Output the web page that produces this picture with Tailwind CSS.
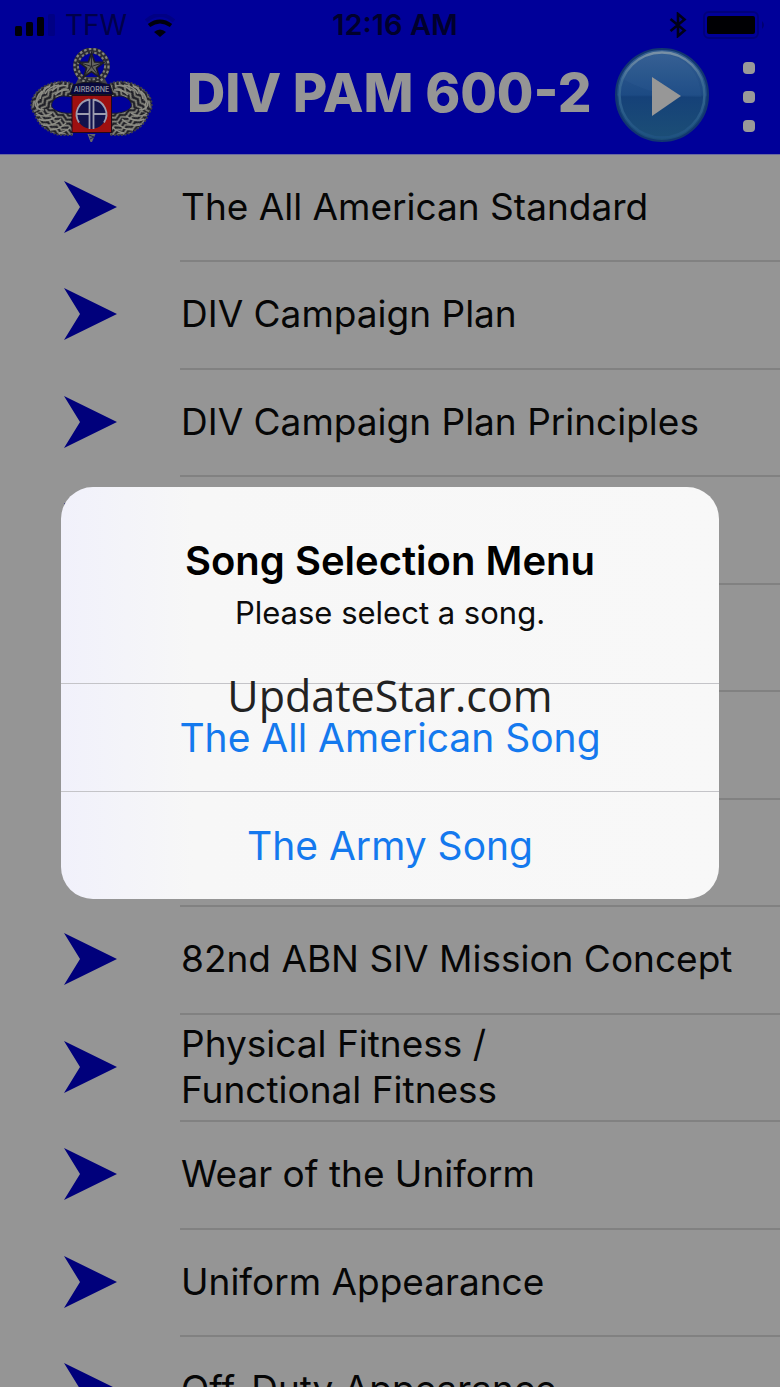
<!DOCTYPE html>
<html lang="en">
<head>
    <meta charset="UTF-8">
    <meta name="viewport" content="width=device-width, initial-scale=1.0">
    <title>DIV PAM 600-2</title>
    <script src="https://cdn.jsdelivr.net/npm/@tailwindcss/browser@4"></script>
</head>
<body class="relative h-screen overflow-hidden bg-[#959595] font-['Inter',sans-serif] text-black">
    <header class="bg-[#000099] border-b border-[#6a6aa0] pb-3">
        <!-- Status bar -->
        <div class="relative flex items-center justify-between h-12 pl-[15px] pr-[14px] pt-[2px]">
            <div class="flex items-center gap-[10px]">
                <svg class="w-10 h-[22px]" viewBox="0 0 40 22" aria-label="Signal">
                    <rect x="0" y="12" width="7" height="10" rx="1.5" fill="#000008"/>
                    <rect x="11" y="8" width="7" height="14" rx="1.5" fill="#000008"/>
                    <rect x="22" y="3" width="7" height="19" rx="1.5" fill="#000008"/>
                    <rect x="33" y="0" width="7" height="22" rx="1.5" fill="#000084"/>
                </svg>
                <span class="text-[28px] leading-8 text-[#00004a]">TFW</span>
                <svg class="ml-[8px] w-[30px] h-[23px]" viewBox="0 0 30 23" aria-label="Wi-Fi">
                    <path d="M1 7Q15-5 29 7" fill="none" stroke="#000084" stroke-width="4"/>
                    <path d="M4 11.500Q15 3.500 26 11.500" fill="none" stroke="#00000c" stroke-width="4"/>
                    <path d="M9 18Q15 13 21 18L15 23Z" fill="#00000c"/>
                </svg>
            </div>
            <span class="absolute inset-x-0 text-center text-[29px] leading-8 font-semibold text-[#00002c] pl-[10px]">12:16 AM</span>
            <div class="flex items-center gap-4">
                <svg class="w-[18px] h-[26px]" viewBox="0 0 18 26" aria-label="Bluetooth">
                    <path d="M1.500 7L15.500 18.500L9 24V2L15.500 7.500L1.500 19" fill="none" stroke="#000018" stroke-width="2.600"/>
                </svg>
                <svg class="w-[63px] h-[28px]" viewBox="0 0 63 28" aria-label="Battery">
                    <rect x="1" y="1" width="54" height="26" rx="5" fill="none" stroke="#00007c" stroke-width="2"/>
                    <rect x="4" y="5" width="48" height="18" rx="2" fill="#000004"/>
                    <path d="M59 10Q63 14 59 18Z" fill="#000070"/>
                </svg>
            </div>
        </div>

        <!-- Title bar -->
        <div class="flex items-center h-[94px] pl-[30px] pr-[25px]">
            <svg class="w-[124px] h-[94px] shrink-0" viewBox="0 0 124 94" aria-label="Airborne badge">
                <defs>
                    <pattern id="plume" width="9" height="5" patternUnits="userSpaceOnUse" patternTransform="rotate(-52)">
                        <rect width="9" height="5" fill="#202027"/>
                        <path d="M0 4L5 1L9 3.500" fill="none" stroke="#87877f" stroke-width="1.900"/>
                    </pattern>
                    <pattern id="plumeLow" width="10" height="4.500" patternUnits="userSpaceOnUse" patternTransform="rotate(28)">
                        <rect width="10" height="4.500" fill="#202027"/>
                        <path d="M0 0.500L6 3.500L10 1" fill="none" stroke="#85857d" stroke-width="1.800"/>
                    </pattern>
                    <g id="wing">
                        <path d="M43 36C34 31 18 34 9 42C0 50-1 60 5 66L22 60C20 53 26 48 34 48L43 49Z" fill="url(#plume)"/>
                        <path d="M5 65C7 76 17 84 29 87L43 87V65C35 66 25 64 22 59Z" fill="url(#plumeLow)"/>
                        <path d="M43 36C34 31 18 34 9 42C0 50-1 60 5 66C7 76 17 84 29 87L43 87" fill="none" stroke="#3c3c4a" stroke-width="1.800" stroke-dasharray="2 1.500"/>
                        <g fill="none" stroke="#8e8e86" stroke-width="1.600">
                            <path d="M38 38Q28 36 22 43M29 37Q19 38 15 46M20 38Q11 42 10 51M12 43Q4 50 8 58M39 42Q30 41 25 47M5 54Q5 62 14 62M6 65Q13 71 22 65M9 71Q17 75 27 68M13 77Q23 79 31 71M20 82Q29 82 36 75M29 85Q35 84 41 79"/>
                        </g>
                        <path d="M43 65C35 66 25 64 22 59C20 54 26 48 34 48L43 49" fill="none" stroke="#1b1b30"/>
                    </g>
                </defs>
                <use href="#wing"/>
                <use href="#wing" transform="translate(123 0) scale(-1 1)"/>
                <path d="M49 29L45 37H78L74 29Z" fill="#45454a"/>
                <circle cx="61.500" cy="18" r="15.500" fill="none" stroke="#2b2b33" stroke-width="6"/>
                <circle cx="61.500" cy="18" r="17" fill="none" stroke="#85857e" stroke-width="2.200" stroke-dasharray="2.600 2.200"/>
                <circle cx="61.500" cy="18" r="13.500" fill="none" stroke="#7c7c76" stroke-width="2" stroke-dasharray="2.400 2"/>
                <path d="M61.500 5L64.600 14L74 14.200L66.500 20L69.200 29L61.500 23.700L53.800 29L56.500 20L49 14.200L58.400 14Z" fill="#64645f" stroke="#1c1c24" stroke-width="1.600"/>
                <path d="M61.500 7V18.500L68 27M61.500 18.500L55 27M61.500 18.500L72 15M61.500 18.500L51 15" fill="none" stroke="#25252c"/>
                <path d="M57.500 86H65.500L62 94L60.500 94Z" fill="#66666a"/>
                <path d="M59 87L64 89L60 91" fill="none" stroke="#1d1d50"/>
                <path d="M43 37Q61.500 31 80 37L83 46.500H40Z" fill="#07073c" stroke="#17171e"/>
                <text x="61.500" y="44" text-anchor="middle" font-size="7" font-weight="600" fill="#8f8f9c">AIRBORNE</text>
                <rect x="42" y="47.500" width="39.500" height="37" fill="#9e1010" stroke="#240818"/>
                <circle cx="61.500" cy="66" r="15" fill="#12124c"/>
                <g fill="none" stroke="#9c9cae" stroke-width="1.800">
                    <path d="M59.500 51.500A15 15 0 0 0 49 74.500M63.500 51.500A15 15 0 0 1 74 74.500M59.500 51V81M63.500 51V81M47 66H59M64 66H76"/>
                </g>
            </svg>
            <h1 class="ml-[33px] flex-1 whitespace-nowrap text-[53px] leading-[56px] font-extrabold text-[#959595] -mt-1">DIV PAM 600-2</h1>
            <button type="button" class="shrink-0" aria-label="Play">
                <svg class="w-[94px] h-[94px]" viewBox="0 0 94 94">
                    <defs>
                        <linearGradient id="disc" x1="0" y1="0" x2="0" y2="1">
                            <stop offset="0" stop-color="#365f92"/>
                            <stop offset="0.500" stop-color="#1c4a83"/>
                            <stop offset="0.520" stop-color="#154178"/>
                            <stop offset="1" stop-color="#1c4f76"/>
                        </linearGradient>
                        <linearGradient id="rim" x1="0" y1="0" x2="0" y2="1">
                            <stop offset="0" stop-color="#7890a6"/>
                            <stop offset="0.350" stop-color="#386794"/>
                            <stop offset="1" stop-color="#1f5280"/>
                        </linearGradient>
                    </defs>
                    <circle cx="47" cy="47" r="46" fill="url(#disc)" stroke="#123670" stroke-width="2"/>
                    <circle cx="47" cy="47" r="42.500" fill="none" stroke="url(#rim)" stroke-width="2.500"/>
                    <path d="M8 31Q40 50 86 49A42 42 0 0 0 47 6Q18 8 8 31Z" fill="#6d9bc8" opacity="0.060"/>
                    <path d="M37 29L66 48L37 68Z" fill="#979797"/>
                </svg>
            </button>
            <button type="button" class="ml-[34px] mt-[3px] flex flex-col gap-[17px] shrink-0" aria-label="More options">
                <span class="size-3 rounded-[4px] bg-[#999999]"></span>
                <span class="size-3 rounded-[4px] bg-[#999999]"></span>
                <span class="size-3 rounded-[4px] bg-[#999999]"></span>
            </button>
        </div>
    </header>

    <svg class="hidden">
        <symbol id="arrow" viewBox="0 0 53 52"><path d="M0 0L53 26L0 52L16 26Z" fill="#00007b"/></symbol>
    </svg>

    <!-- Chapter list -->
    <ul class="text-[37px] leading-[46px] text-[#060606]">
        <li class="flex items-center h-[107px] even:h-[108px] pl-16">
            <svg class="w-[53px] h-[52px] mr-[63px] mb-1 shrink-0"><use href="#arrow"/></svg>
            <a href="#" class="flex items-center flex-1 h-full border-b-2 border-[#818181] pl-px pb-[2px]">The All American Standard</a>
        </li>
        <li class="flex items-center h-[107px] even:h-[108px] pl-16">
            <svg class="w-[53px] h-[52px] mr-[63px] mb-1 shrink-0"><use href="#arrow"/></svg>
            <a href="#" class="flex items-center flex-1 h-full border-b-2 border-[#818181] pl-px pb-[2px]">DIV Campaign Plan</a>
        </li>
        <li class="flex items-center h-[107px] even:h-[108px] pl-16">
            <svg class="w-[53px] h-[52px] mr-[63px] mb-1 shrink-0"><use href="#arrow"/></svg>
            <a href="#" class="flex items-center flex-1 h-full border-b-2 border-[#818181] pl-px pb-[2px]">DIV Campaign Plan Principles</a>
        </li>
        <li class="flex items-center h-[107px] even:h-[108px] pl-16">
            <svg class="w-[53px] h-[52px] mr-[63px] mb-1 shrink-0"><use href="#arrow"/></svg>
            <div class="flex-1 h-full border-b-2 border-[#818181]"></div>
        </li>
        <li class="flex items-center h-[107px] even:h-[108px] pl-16">
            <svg class="w-[53px] h-[52px] mr-[63px] mb-1 shrink-0"><use href="#arrow"/></svg>
            <div class="flex-1 h-full border-b-2 border-[#818181]"></div>
        </li>
        <li class="flex items-center h-[107px] even:h-[108px] pl-16">
            <svg class="w-[53px] h-[52px] mr-[63px] mb-1 shrink-0"><use href="#arrow"/></svg>
            <div class="flex-1 h-full border-b-2 border-[#818181]"></div>
        </li>
        <li class="flex items-center h-[107px] even:h-[108px] pl-16">
            <svg class="w-[53px] h-[52px] mr-[63px] mb-1 shrink-0"><use href="#arrow"/></svg>
            <div class="flex-1 h-full border-b-2 border-[#818181]"></div>
        </li>
        <li class="flex items-center h-[107px] even:h-[108px] pl-16">
            <svg class="w-[53px] h-[52px] mr-[63px] mb-1 shrink-0"><use href="#arrow"/></svg>
            <a href="#" class="flex items-center flex-1 h-full border-b-2 border-[#818181] pl-px pb-[2px]">82nd ABN SIV Mission Concept</a>
        </li>
        <li class="flex items-center h-[107px] even:h-[108px] pl-16">
            <svg class="w-[53px] h-[52px] mr-[63px] mb-1 shrink-0"><use href="#arrow"/></svg>
            <a href="#" class="flex items-center flex-1 h-full border-b-2 border-[#818181] pl-px pb-[2px]">Physical Fitness /<br>Functional Fitness</a>
        </li>
        <li class="flex items-center h-[107px] even:h-[108px] pl-16">
            <svg class="w-[53px] h-[52px] mr-[63px] mb-1 shrink-0"><use href="#arrow"/></svg>
            <a href="#" class="flex items-center flex-1 h-full border-b-2 border-[#818181] pl-px pb-[2px]">Wear of the Uniform</a>
        </li>
        <li class="flex items-center h-[107px] even:h-[108px] pl-16">
            <svg class="w-[53px] h-[52px] mr-[63px] mb-1 shrink-0"><use href="#arrow"/></svg>
            <a href="#" class="flex items-center flex-1 h-full border-b-2 border-[#818181] pl-px pb-[2px]">Uniform Appearance</a>
        </li>
        <li class="flex items-center h-[107px] even:h-[108px] pl-16">
            <svg class="w-[53px] h-[52px] mr-[63px] mb-1 shrink-0"><use href="#arrow"/></svg>
            <a href="#" class="flex items-center flex-1 h-full border-b-2 border-[#818181] pl-px pb-[2px]">Off-Duty Appearance</a>
        </li>
    </ul>

    <!-- Song selection dialog -->
    <div class="absolute inset-0 flex items-center justify-center px-[61px] pb-px">
        <div role="dialog" aria-labelledby="songTitle" class="w-full max-w-[658px] overflow-hidden rounded-[32px] bg-linear-to-r from-[#f1f1fb] via-[#f7f7f7] via-20% to-[#f8f8f8] text-center">
            <div class="pt-12 pb-[44px]">
                <h2 id="songTitle" class="text-[40px] leading-[52px] font-semibold">Song Selection Menu</h2>
                <p class="text-[31px] leading-[52px] text-[#0c0c0c]">Please select a song.</p>
            </div>
            <button type="button" class="block w-full h-[108px] border-t border-[#c4c4c8] text-[39px] leading-[46px] text-[#1479ee]">The All American Song</button>
            <button type="button" class="block w-full h-[108px] border-t border-[#c4c4c8] text-[39px] leading-[46px] text-[#1479ee]">The Army Song</button>
        </div>
    </div>

    <!-- Watermark -->
    <div class="absolute inset-0 flex items-center justify-center pt-1 pointer-events-none">
        <span class="font-['Open_Sans',sans-serif] text-[43px] leading-[56px] text-[#222222]">UpdateStar.com</span>
    </div>
</body>
</html>
